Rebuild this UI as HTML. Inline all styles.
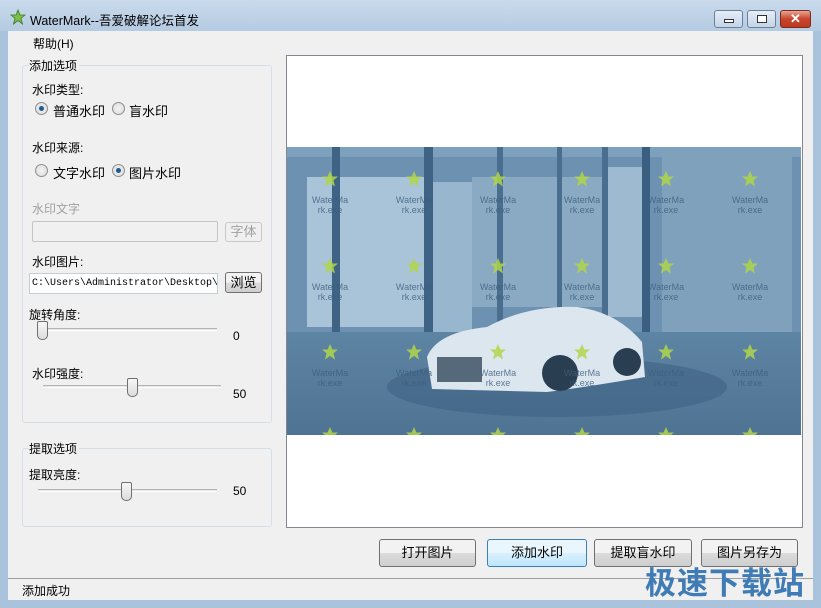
<!DOCTYPE html><html><head><meta charset="utf-8"><style>
*{margin:0;padding:0;box-sizing:border-box}
body{width:821px;height:608px;overflow:hidden;background:#a9c3dd;font-family:"Liberation Sans","Noto Sans CJK SC",sans-serif;font-size:12px;color:#000;position:relative}
.a{position:absolute}
#title{left:0;top:0;width:821px;height:31px;background:linear-gradient(#c9daec,#b5cbe2)}
#client{left:8px;top:31px;width:805px;height:569px;background:#f0f0f0}
.grp{border:1px solid #d5dfe5;border-radius:3px;background:#f0f0f0}
.lbl{white-space:nowrap}
.radio{width:13px;height:13px;border-radius:50%;border:1px solid #8e8f8f;background:radial-gradient(#f4f4f4,#d8d8d8)}
.radio.on::after{content:"";position:absolute;left:3px;top:3px;width:5px;height:5px;border-radius:50%;background:#1d5b8e}
.btn{border:1px solid #707070;border-radius:3px;background:linear-gradient(#f2f2f2 50%,#dcdcdc 50%,#cfcfcf);text-align:center;line-height:25px;font-size:13px}
.track{height:3px;border-top:1px solid #b5b5b5;border-bottom:1px solid #fff;background:#e6e6e6}
.thumb{width:11px;height:19px;border:1px solid #707070;border-radius:2px 2px 5px 5px;background:linear-gradient(#f7f7f7,#dcdcdc)}
.wb{height:18px;border:1px solid #6d7f95;border-radius:3px;background:linear-gradient(#e5eef8,#c3d4e8)}
</style></head><body>
<div id="title" class="a"></div>
<svg class="a" style="left:10px;top:9px" width="16" height="16" viewBox="0 0 16 16"><polygon points="8,1 10,6 15,6 11,9.5 12.5,15 8,11.5 3.5,15 5,9.5 1,6 6,6" fill="#7cc04a" stroke="#3a7a20" stroke-width="0.8"/></svg>
<div class="a lbl" style="left:30px;top:10px;font-size:12.5px;color:#000">WaterMark--吾爱破解论坛首发</div>
<div class="a wb" style="left:714px;top:10px;width:29px"><div class="a" style="left:9px;top:8px;width:10px;height:4px;border:1px solid #333;background:#fff"></div></div>
<div class="a wb" style="left:747px;top:10px;width:29px"><div class="a" style="left:9px;top:4px;width:10px;height:8px;border:1px solid #333;background:#fff"></div></div>
<div class="a" style="left:780px;top:10px;width:31px;height:18px;border:1px solid #7a2a1e;border-radius:3px;background:linear-gradient(#e8a493,#c8452f 50%,#c0391f);color:#fff;font-weight:bold;text-align:center;line-height:16px;font-size:13px">✕</div>
<div id="client" class="a"></div>
<div class="a lbl" style="left:33px;top:35px">帮助(H)</div>
<div class="a grp" style="left:22px;top:65px;width:250px;height:358px"></div>
<div class="a lbl" style="left:29px;top:57px;background:#f0f0f0;padding-right:2px">添加选项</div>
<div class="a lbl" style="left:32px;top:81px">水印类型:</div>
<div class="a radio on" style="left:35px;top:102px"></div><div class="a lbl" style="left:53px;top:101px;font-size:13px">普通水印</div>
<div class="a radio" style="left:112px;top:102px"></div><div class="a lbl" style="left:129px;top:101px;font-size:13px">盲水印</div>
<div class="a lbl" style="left:32px;top:139px">水印来源:</div>
<div class="a radio" style="left:35px;top:164px"></div><div class="a lbl" style="left:53px;top:163px;font-size:13px">文字水印</div>
<div class="a radio on" style="left:112px;top:164px"></div><div class="a lbl" style="left:129px;top:163px;font-size:13px">图片水印</div>
<div class="a lbl" style="left:32px;top:200px;color:#a0a0a0">水印文字</div>
<div class="a" style="left:32px;top:221px;width:186px;height:21px;border:1px solid #c5c5c5;border-radius:2px;background:#f0f0f0"></div>
<div class="a" style="left:225px;top:222px;width:37px;height:20px;border:1px solid #c8c8c8;border-radius:3px;color:#a0a0a0;text-align:center;line-height:18px;font-size:13px">字体</div>
<div class="a lbl" style="left:32px;top:253px">水印图片:</div>
<div class="a" style="left:29px;top:273px;width:189px;height:21px;border:1px solid #c5cdd5;background:#fff;overflow:hidden;font-family:'Liberation Mono',monospace;font-size:10px;line-height:19px;padding-left:2px;white-space:nowrap">C:\Users\Administrator\Desktop\</div>
<div class="a btn" style="left:225px;top:272px;width:37px;height:21px;line-height:19px">浏览</div>
<div class="a lbl" style="left:29px;top:306px">旋转角度:</div>
<div class="a track" style="left:43px;top:328px;width:174px"></div>
<div class="a thumb" style="left:37px;top:321px"></div>
<div class="a lbl" style="left:233px;top:329px">0</div>
<div class="a lbl" style="left:32px;top:365px">水印强度:</div>
<div class="a track" style="left:43px;top:385px;width:178px"></div>
<div class="a thumb" style="left:127px;top:378px"></div>
<div class="a lbl" style="left:233px;top:387px">50</div>
<div class="a grp" style="left:22px;top:448px;width:250px;height:79px"></div>
<div class="a lbl" style="left:29px;top:440px;background:#f0f0f0;padding-right:2px">提取选项</div>
<div class="a lbl" style="left:29px;top:466px">提取亮度:</div>
<div class="a track" style="left:38px;top:489px;width:179px"></div>
<div class="a thumb" style="left:121px;top:482px"></div>
<div class="a lbl" style="left:233px;top:484px">50</div>
<div class="a" style="left:286px;top:55px;width:517px;height:473px;border:1px solid #828790;background:#fff"></div>
<svg class="a" style="left:287px;top:147px" width="514" height="288" viewBox="0 0 514 288">
<defs><linearGradient id="fl" x1="0" y1="0" x2="0" y2="1"><stop offset="0" stop-color="#5e84a4"/><stop offset="1" stop-color="#4f7393"/></linearGradient>
<polygon id="s" points="0,-8 2.4,-2.5 8,-2.5 3.5,1.3 5,7.5 0,4 -5,7.5 -3.5,1.3 -8,-2.5 -2.4,-2.5"/></defs>
<rect width="514" height="288" fill="#6d92b1"/>
<rect x="0" y="0" width="514" height="10" fill="#7da0bd"/>
<rect x="20" y="30" width="120" height="150" fill="#a9c3d8"/>
<rect x="145" y="35" width="40" height="150" fill="#98b6cd"/>
<rect x="185" y="30" width="130" height="130" fill="#8aaac3"/>
<rect x="320" y="20" width="35" height="150" fill="#9dbad0"/>
<rect x="375" y="5" width="130" height="185" fill="#7fa1bc"/>
<rect x="45" y="0" width="8" height="215" fill="#3f6384"/>
<rect x="137" y="0" width="9" height="210" fill="#3f6384"/>
<rect x="210" y="0" width="6" height="200" fill="#4a6e8f"/>
<rect x="270" y="0" width="5" height="190" fill="#4a6e8f"/>
<rect x="315" y="0" width="6" height="190" fill="#4a6e8f"/>
<rect x="355" y="0" width="8" height="195" fill="#3b5f80"/>
<rect x="0" y="185" width="514" height="103" fill="url(#fl)"/>
<ellipse cx="270" cy="240" rx="170" ry="30" fill="#3f6384" opacity=".6"/>
<path d="M140 210 Q150 185 200 180 Q240 158 290 160 Q330 165 355 195 L358 230 Q300 240 260 245 L145 242 Z" fill="#dbe6ef"/>
<circle cx="273" cy="226" r="18" fill="#2a3e52"/><circle cx="340" cy="215" r="14" fill="#2a3e52"/>
<rect x="150" y="210" width="45" height="25" fill="#56697b"/>
<g font-family="Liberation Sans,sans-serif" font-size="9" fill="#3d5f7d" text-anchor="middle" opacity=".8">
<text x="43" y="56">WaterMa</text><text x="43" y="66">rk.exe</text>
<text x="127" y="56">WaterMa</text><text x="127" y="66">rk.exe</text>
<text x="211" y="56">WaterMa</text><text x="211" y="66">rk.exe</text>
<text x="295" y="56">WaterMa</text><text x="295" y="66">rk.exe</text>
<text x="379" y="56">WaterMa</text><text x="379" y="66">rk.exe</text>
<text x="463" y="56">WaterMa</text><text x="463" y="66">rk.exe</text>
<text x="43" y="143">WaterMa</text><text x="43" y="153">rk.exe</text>
<text x="127" y="143">WaterMa</text><text x="127" y="153">rk.exe</text>
<text x="211" y="143">WaterMa</text><text x="211" y="153">rk.exe</text>
<text x="295" y="143">WaterMa</text><text x="295" y="153">rk.exe</text>
<text x="379" y="143">WaterMa</text><text x="379" y="153">rk.exe</text>
<text x="463" y="143">WaterMa</text><text x="463" y="153">rk.exe</text>
<text x="43" y="229">WaterMa</text><text x="43" y="239">rk.exe</text>
<text x="127" y="229">WaterMa</text><text x="127" y="239">rk.exe</text>
<text x="211" y="229">WaterMa</text><text x="211" y="239">rk.exe</text>
<text x="295" y="229">WaterMa</text><text x="295" y="239">rk.exe</text>
<text x="379" y="229">WaterMa</text><text x="379" y="239">rk.exe</text>
<text x="463" y="229">WaterMa</text><text x="463" y="239">rk.exe</text>
</g>
<g fill="#b0d64a" opacity=".85">
<use href="#s" x="43" y="32"/><use href="#s" x="127" y="32"/><use href="#s" x="211" y="32"/><use href="#s" x="295" y="32"/><use href="#s" x="379" y="32"/><use href="#s" x="463" y="32"/>
<use href="#s" x="43" y="119"/><use href="#s" x="127" y="119"/><use href="#s" x="211" y="119"/><use href="#s" x="295" y="119"/><use href="#s" x="379" y="119"/><use href="#s" x="463" y="119"/>
<use href="#s" x="43" y="205"/><use href="#s" x="127" y="205"/><use href="#s" x="211" y="205"/><use href="#s" x="295" y="205"/><use href="#s" x="379" y="205"/><use href="#s" x="463" y="205"/>
<use href="#s" x="43" y="288"/><use href="#s" x="127" y="288"/><use href="#s" x="211" y="288"/><use href="#s" x="295" y="288"/><use href="#s" x="379" y="288"/><use href="#s" x="463" y="288"/>
</g>
</svg>
<div class="a btn" style="left:379px;top:539px;width:97px;height:28px">打开图片</div>
<div class="a btn" style="left:487px;top:539px;width:100px;height:28px;border-color:#3c7fb1;background:linear-gradient(#eaf6fd 50%,#d9f0fc 50%,#bee6fd)">添加水印</div>
<div class="a btn" style="left:594px;top:539px;width:98px;height:28px">提取盲水印</div>
<div class="a btn" style="left:701px;top:539px;width:97px;height:28px">图片另存为</div>
<div class="a" style="left:8px;top:578px;width:805px;height:1px;background:#a0a0a0"></div>
<div class="a lbl" style="left:22px;top:582px">添加成功</div>
<div class="a lbl" style="left:645px;top:558px;font-size:31px;font-weight:bold;color:#3f7cb6;letter-spacing:1px">极速下载站</div>
</body></html>
